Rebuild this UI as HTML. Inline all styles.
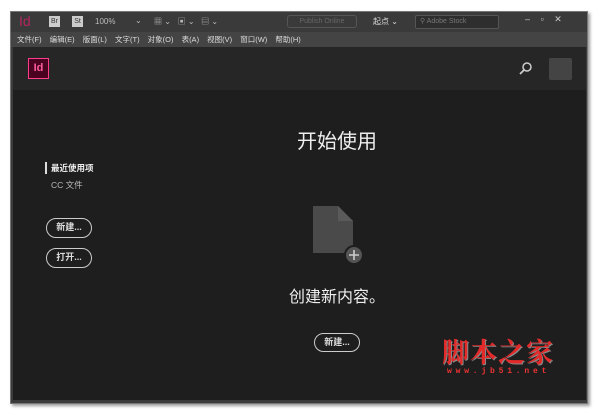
<!DOCTYPE html>
<html><head><meta charset="utf-8"><style>
*{margin:0;padding:0;box-sizing:border-box}
body{width:600px;height:415px;background:#fff;position:relative;overflow:hidden;font-family:"Liberation Sans","Noto Sans CJK SC",sans-serif}
.a{position:absolute}
.win{left:10px;top:11px;width:578px;height:393px;background:#3b3b3b;border:1px solid #777;box-shadow:2px 2px 3px #999}
.t{color:#bbb;font-size:8px;white-space:nowrap}
.btn{border:1.5px solid #ccc;border-radius:10px;color:#ddd;font-size:9px;text-align:center;line-height:16px;font-weight:bold}
</style></head><body>
<div class="a win"></div>
<div class="a" style="left:11px;top:12px;width:576px;height:20px;background:#3a3a3a"></div>
<div class="a" style="left:19px;top:13px;color:#b3265e;font-size:14px">Id</div>
<div class="a t" style="left:49px;top:16px;width:11px;height:11px;background:#ccc;color:#333;font-size:7px;text-align:center;line-height:11px">Br</div>
<div class="a t" style="left:72px;top:16px;width:11px;height:11px;background:#ccc;color:#333;font-size:7px;text-align:center;line-height:11px">St</div>
<div class="a t" style="left:95px;top:17px">100%</div>
<div class="a t" style="left:135px;top:16px">⌄</div>
<div class="a t" style="left:154px;top:16px">▦ ⌄ &nbsp; ▣ ⌄ &nbsp; ▤ ⌄</div>
<div class="a" style="left:287px;top:15px;width:70px;height:13px;border:1px solid #555;border-radius:3px;color:#666;font-size:7px;line-height:11px;text-align:center">Publish Online</div>
<div class="a t" style="left:373px;top:16px;color:#ddd">起点 ⌄</div>
<div class="a" style="left:415px;top:15px;width:84px;height:14px;background:#2e2e2e;border:1px solid #555;border-radius:2px;color:#777;font-size:7px;line-height:12px;padding-left:4px">⚲ Adobe Stock</div>
<div class="a t" style="left:525px;top:14px;color:#ccc;font-size:9px;word-spacing:8px">– ▫ ✕</div>
<div class="a" style="left:11px;top:32px;width:576px;height:15px;background:#444"></div>
<div class="a t" style="left:17px;top:34px;color:#ddd;font-size:7.5px;word-spacing:6px">文件(F) 编辑(E) 版面(L) 文字(T) 对象(O) 表(A) 视图(V) 窗口(W) 帮助(H)</div>
<div class="a" style="left:13px;top:47px;width:573px;height:43px;background:#262626"></div>
<div class="a" style="left:28px;top:58px;width:21px;height:21px;background:#49021f;border:1.5px solid #ff3d8c;color:#ff5c9e;font-size:11px;font-weight:bold;text-align:center;line-height:18px">Id</div>
<svg class="a" style="left:519px;top:61px" width="14" height="14"><circle cx="8" cy="6" r="4" fill="none" stroke="#ccc" stroke-width="1.5"/><line x1="5" y1="9" x2="1" y2="13" stroke="#ccc" stroke-width="1.8"/></svg>
<div class="a" style="left:549px;top:58px;width:23px;height:22px;background:#444;border-radius:2px"></div>
<div class="a" style="left:13px;top:90px;width:573px;height:310px;background:#1e1e1e"></div>
<div class="a" style="left:45px;top:162px;width:1.5px;height:12px;background:#ddd"></div>
<div class="a" style="left:51px;top:162px;color:#eee;font-size:8.5px;font-weight:bold">最近使用项</div>
<div class="a" style="left:51px;top:179px;color:#bbb;font-size:8.5px">CC 文件</div>
<div class="a btn" style="left:46px;top:218px;width:46px;height:20px;line-height:17px">新建...</div>
<div class="a btn" style="left:46px;top:248px;width:46px;height:20px;line-height:17px">打开...</div>
<div class="a" style="left:237px;top:125px;width:200px;text-align:center;color:#eee;font-size:20px">开始使用</div>
<svg class="a" style="left:310px;top:203px" width="56" height="62"><path d="M3 3h25l15 15v32h-40z" fill="#4a4a4a"/><path d="M28 3v15h15z" fill="#5a5a5a"/><circle cx="44" cy="52" r="9" fill="#555" stroke="#1e1e1e" stroke-width="2"/><path d="M44 47v10M39 52h10" stroke="#ccc" stroke-width="1.6"/></svg>
<div class="a" style="left:237px;top:283px;width:200px;text-align:center;color:#eee;font-size:16px">创建新内容。</div>
<div class="a btn" style="left:314px;top:333px;width:46px;height:19px;line-height:16px">新建...</div>
<div class="a" style="left:442px;top:331px;color:#e32a2a;font-size:27px;font-family:'Noto Serif CJK SC',serif;letter-spacing:1px;text-shadow:1px 1px 0 #888;font-weight:bold">脚本之家</div>
<div class="a" style="left:447px;top:367px;color:#e33;font-size:8px;font-weight:bold;letter-spacing:3.8px;font-family:'Liberation Mono',monospace">www.jb51.net</div>
</body></html>
